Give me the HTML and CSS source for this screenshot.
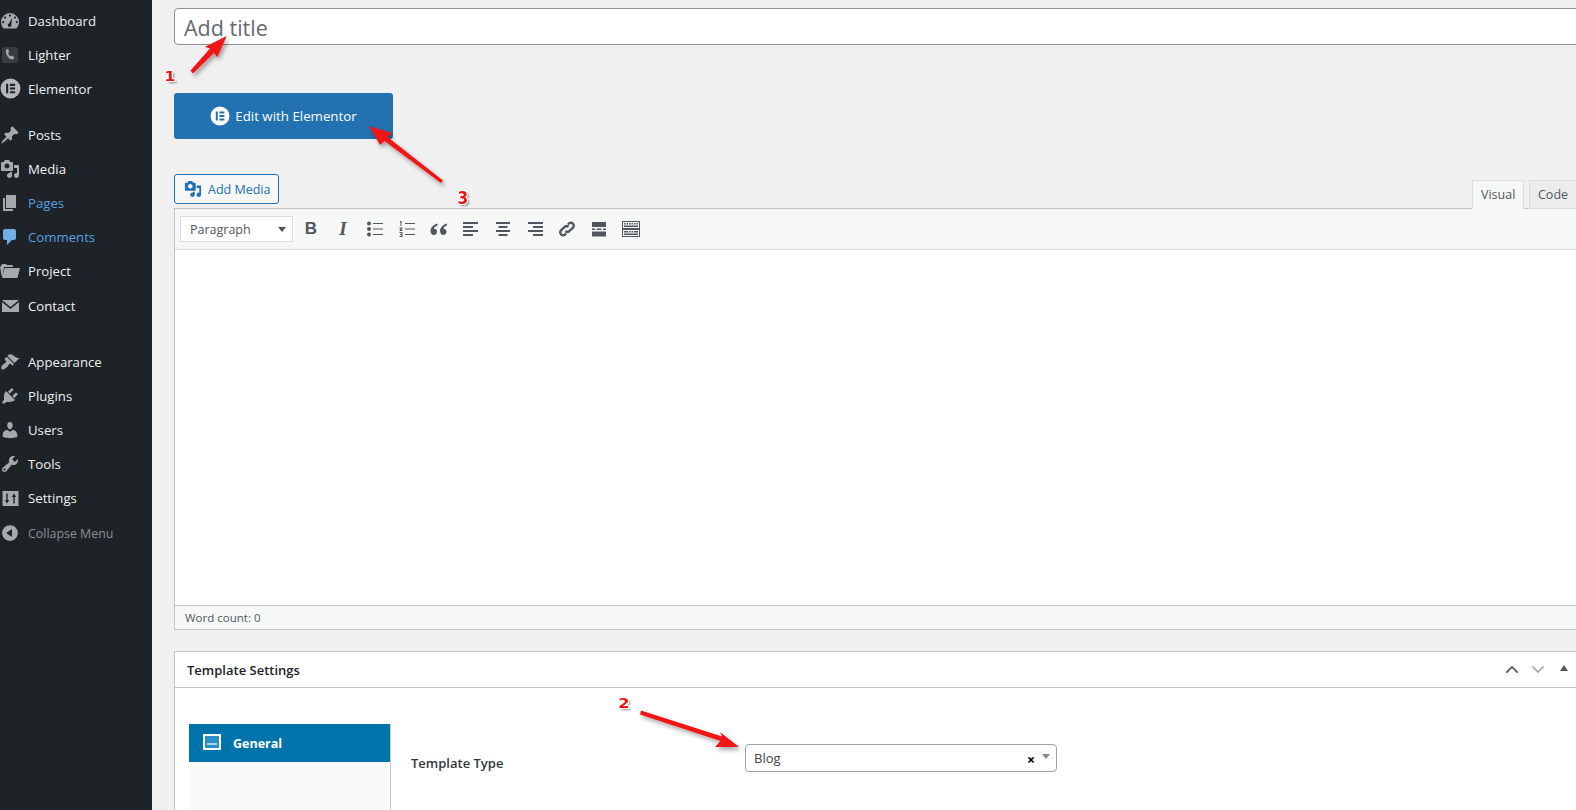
FILE: index.html
```html
<!DOCTYPE html>
<html lang="en">
<head>
<meta charset="utf-8">
<title>Add New Page</title>
<link rel="stylesheet" href="styles.css">
</head>
<body>
<svg class="sprite" width="0" height="0" aria-hidden="true">
  <symbol id="i-dash" viewBox="0 0 20 20"><path fill-rule="evenodd" d="M10 2a9 9 0 0 1 9 9c0 2.500-1 4.800-2.600 6.500H3.600A9 9 0 0 1 1 11a9 9 0 0 1 9-9zM10 3.500a1.100 1.100 0 1 0 0 2.200 1.100 1.100 0 0 0 0-2.200zM5 5.500a1.100 1.100 0 1 0 0 2.200 1.100 1.100 0 0 0 0-2.200zM15 5.500a1.100 1.100 0 1 0 0 2.200 1.100 1.100 0 0 0 0-2.200zM3.200 10a1.100 1.100 0 1 0 0 2.200 1.100 1.100 0 0 0 0-2.200zM16.800 10a1.100 1.100 0 1 0 0 2.200 1.100 1.100 0 0 0 0-2.200zM12.300 6.800L9 12.500a1.800 1.800 0 1 0 2.300 1.100z"/></symbol>
  <symbol id="i-el" viewBox="0 0 20 20"><path fill-rule="evenodd" d="M10 .5a9.500 9.500 0 1 1 0 19 9.500 9.500 0 0 1 0-19zM5.800 5.500v9h2v-9zM9.400 5.500v2h5v-2zM9.400 9v2h5V9zM9.400 12.500v2h5v-2z"/></symbol>
  <symbol id="i-post" viewBox="0 0 20 20"><path d="M10.440 3.020l1.820-1.820 6.360 6.350-1.830 1.820c-1.050-.68-2.480-.57-3.410.36l-.75.75c-.92.93-1.040 2.350-.35 3.410l-1.830 1.820-2.410-2.410-2.800 2.790c-.42.42-3.380 2.710-3.800 2.290s1.860-3.390 2.280-3.810l2.790-2.790L4.100 9.360l1.830-1.820c1.050.69 2.480.57 3.400-.36l.75-.75c.93-.92 1.050-2.350.36-3.410z"/></symbol>
  <symbol id="i-media" viewBox="0 0 20 20"><path fill-rule="evenodd" d="M13 11V4c0-.55-.45-1-1-1h-1.670L9 1H5L3.670 3H2c-.55 0-1 .45-1 1v7c0 .55.45 1 1 1h10c.55 0 1-.45 1-1zM7 4.500c1.380 0 2.500 1.120 2.500 2.500S8.380 9.500 7 9.500 4.500 8.380 4.500 7 5.620 4.500 7 4.500zM14 6h5v10.500c0 1.380-1.120 2.500-2.500 2.500S14 17.880 14 16.500s1.120-2.500 2.500-2.500c.17 0 .34.02.5.05V9h-3V6zm-4 8.050V13h2v3.500c0 1.380-1.120 2.500-2.500 2.500S7 17.880 7 16.500 8.120 14 9.500 14c.17 0 .34.02.5.05z"/></symbol>
  <symbol id="i-page" viewBox="0 0 20 20"><path d="M6 15V2h10v13H6zm-1 1h8v2H3V5h2v11z"/></symbol>
  <symbol id="i-comment" viewBox="0 0 20 20"><path d="M5 2h9c1.100 0 2 .9 2 2v7c0 1.100-.9 2-2 2h-2l-5 5v-5H5c-1.100 0-2-.9-2-2V4c0-1.100.9-2 2-2z"/></symbol>
  <symbol id="i-folder" viewBox="0 0 20 20"><path d="M1 5l1-2h4l1 1h5l1 1v1H4L2.500 15H1.500L0 6zM4.500 7H20l-2.500 10H2z"/></symbol>
  <symbol id="i-mail" viewBox="0 0 20 20"><path d="M2 4h17L10.500 11zM2 6l8.500 7L19 6v10H2z"/></symbol>
  <symbol id="i-brush" viewBox="0 0 20 20"><path d="M14.480 11.060L7.410 3.990l1.500-1.500c.5-.56 2.300-.47 3.510.32 1.210.8 1.430 1.280 2.910 2.100 1.180.64 2.450 1.260 4.450.85zm-.71.71L6.700 4.700 4.930 6.470c-.39.39-.39 1.020 0 1.410l1.060 1.060c.39.39.39 1.030 0 1.420-.6.6-1.430 1.110-2.210 1.690-.35.26-.7.53-1.010.84C1.430 13.230.78 15.600 1.500 17s3.770-.07 5.410-1.710c.31-.31.58-.66.84-1.010.58-.78 1.090-1.610 1.690-2.210.39-.39 1.020-.39 1.410 0l1.060 1.060c.39.39 1.020.39 1.410 0z"/></symbol>
  <symbol id="i-plug" viewBox="0 0 20 20"><path d="M13.110 4.360L9.870 7.600 8 5.730l3.240-3.240c.35-.34 1.050-.2 1.560.32.52.51.66 1.210.31 1.550zm-8 1.770l.91-1.120 9.010 9.010-1.190.84c-.71.71-2.630 1.160-3.820 1.160H6.140L4.900 17.260c-.59.59-1.540.59-2.120 0-.59-.58-.59-1.530 0-2.120l1.240-1.240v-3.880c0-1.130.4-3.190 1.090-3.890zm7.260 3.970l3.240-3.240c.34-.35 1.040-.21 1.550.31.52.51.66 1.210.31 1.550l-3.240 3.250z"/></symbol>
  <symbol id="i-user" viewBox="0 0 20 20"><path d="M10 9.250c-2.270 0-2.730-3.440-2.730-3.440C7 4.020 7.820 2 9.970 2c2.160 0 2.980 2.020 2.710 3.810 0 0-.41 3.440-2.680 3.440zm0 2.570L12.720 10c2.390 0 4.520 2.330 4.520 4.530v2.490s-3.650 1.130-7.240 1.130c-3.650 0-7.240-1.130-7.240-1.130v-2.490c0-2.250 1.940-4.480 4.470-4.480z"/></symbol>
  <symbol id="i-tool" viewBox="0 0 20 20"><path fill-rule="evenodd" d="M16.680 9.770c-1.340 1.340-3.300 1.670-4.950.99l-5.410 6.520c-.99.99-2.590.99-3.580 0s-.99-2.590 0-3.570l6.520-5.420c-.68-1.650-.35-3.610.99-4.950 1.280-1.280 3.120-1.620 4.720-1.060l-2.890 2.890 2.820 2.820 2.860-2.870c.53 1.580.18 3.390-1.080 4.670zM3.810 16.210c.4.39 1.040.39 1.430 0 .4-.4.4-1.040 0-1.430-.39-.4-1.030-.4-1.430 0-.39.39-.39 1.030 0 1.430z"/></symbol>
  <symbol id="i-set" viewBox="0 0 20 20"><path fill-rule="evenodd" d="M2.500 3h16v15h-16zM6.300 5.500v6.500H4.800L7 15.500l2.200-3.500H7.700V5.500zM13.300 15.500V9h-1.500L14 5.500 16.200 9h-1.500v6.500z"/></symbol>
  <symbol id="i-collapse" viewBox="0 0 20 20"><path fill-rule="evenodd" d="M10 2.160c4.330 0 7.840 3.510 7.840 7.840s-3.510 7.840-7.840 7.840S2.160 14.330 2.160 10 5.710 2.160 10 2.160zm2 11.720V6.120L6.180 9.970z"/></symbol>
</svg>

<div class="layout">
  <nav class="sidebar">
    <ul class="menu">
      <li class="item"><svg class="ico"><use href="#i-dash"/></svg>Dashboard</li>
      <li class="item"><span class="ico-lighter"><svg viewBox="0 0 16 16"><path d="M4 2.500l2.200-.5 1 3-1.200 1c.4 1.400 1.400 2.700 2.800 3.400l1.200-.9 2.400 2-1 1.800C6.500 13 3.500 8 4 2.500z"/></svg></span>Lighter</li>
      <li class="item item-gap"><svg class="ico ico-big"><use href="#i-el"/></svg>Elementor</li>
      <li class="item"><svg class="ico"><use href="#i-post"/></svg>Posts</li>
      <li class="item"><svg class="ico"><use href="#i-media"/></svg>Media</li>
      <li class="item is-link"><svg class="ico"><use href="#i-page"/></svg>Pages</li>
      <li class="item is-link"><svg class="ico ico-blue"><use href="#i-comment"/></svg>Comments</li>
      <li class="item"><svg class="ico"><use href="#i-folder"/></svg>Project</li>
      <li class="item item-gap-wide"><svg class="ico"><use href="#i-mail"/></svg>Contact</li>
      <li class="item"><svg class="ico"><use href="#i-brush"/></svg>Appearance</li>
      <li class="item"><svg class="ico"><use href="#i-plug"/></svg>Plugins</li>
      <li class="item"><svg class="ico"><use href="#i-user"/></svg>Users</li>
      <li class="item"><svg class="ico"><use href="#i-tool"/></svg>Tools</li>
      <li class="item"><svg class="ico"><use href="#i-set"/></svg>Settings</li>
      <li class="item item-muted"><svg class="ico"><use href="#i-collapse"/></svg>Collapse Menu</li>
    </ul>
  </nav>

  <main class="main">
    <div class="title-input">Add title</div>

    <button class="el-button" type="button">
      <svg class="el-ico"><use href="#i-el"/></svg>Edit with Elementor
    </button>

    <div class="editor-top">
      <button class="add-media" type="button"><svg class="am-ico"><use href="#i-media"/></svg>Add Media</button>
      <div class="tabs">
        <span class="tab tab-on">Visual</span>
        <span class="tab">Code</span>
      </div>
    </div>

    <section class="editor">
      <div class="toolbar">
        <div class="format">Paragraph<span class="caret"></span></div>
        <div class="tools">
          <span class="tool tool-b">B</span>
          <span class="tool tool-i">I</span>
          <span class="tool"><svg viewBox="0 0 20 20"><circle cx="4" cy="4.500" r="2"/><circle cx="4" cy="10" r="2"/><circle cx="4" cy="15.500" r="2"/><path d="M8 4h10v1H8zM8 9.500h10v1H8zM8 15h10v1H8z"/></svg></span>
          <span class="tool"><svg viewBox="0 0 20 20"><path d="M3 2h1.500v5H3.500V3.200H3zM2.500 8.500h3v1L4 11h1.500v1h-3v-1L4 9.500H2.500zM2.500 13h3v5h-3v-1h2v-1H3v-1h1.500v-1h-2zM8 4h10v1H8zM8 9.500h10v1H8zM8 15h10v1H8z"/></svg></span>
          <span class="tool"><svg viewBox="0 0 20 20"><path d="M8.500 4.500C5 5.500 1.500 8 1.500 12c0 2.200 1.300 4 3.300 4s3.200-1.500 3.200-3.200-1.400-3-3-3c.3-1.800 1.800-2.800 3.500-3.300zM18 4.500c-3.500 1-7 3.500-7 7.500 0 2.200 1.300 4 3.300 4s3.200-1.500 3.200-3.200-1.400-3-3-3c.3-1.800 1.800-2.800 3.500-3.300z"/></svg></span>
          <span class="tool"><svg viewBox="0 0 20 20"><path d="M2 3h15v2H2zM2 7h10v2H2zM2 11h15v2H2zM2 15h10v2H2z"/></svg></span>
          <span class="tool"><svg viewBox="0 0 20 20"><path d="M3 3h14v2H3zM5.500 7h9v2h-9zM3 11h14v2H3zM5.500 15h9v2h-9z"/></svg></span>
          <span class="tool"><svg viewBox="0 0 20 20"><path d="M3 3h15v2H3zM8 7h10v2H8zM3 11h15v2H3zM8 15h10v2H8z"/></svg></span>
          <span class="tool"><svg viewBox="0 0 20 20"><path fill="none" stroke-width="2.400" d="M11 5.500l1.500-1.500a3 3 0 0 1 4 4l-4 4a3 3 0 0 1-4 0M9 14.500L7.500 16a3 3 0 0 1-4-4l4-4a3 3 0 0 1 4 0"/></svg></span>
          <span class="tool"><svg viewBox="0 0 20 20"><path d="M3 3h14v5H3zM3 9.500h3v1.500H3zM7.500 9.500h5v1.500h-5zM14 9.500h3v1.500h-3zM3 12.500h14v5H3z"/></svg></span>
          <span class="tool"><svg viewBox="0 0 20 20"><path fill-rule="evenodd" d="M1 2h18v16H1zM2 3v6h16V3zM2 11v6h16v-6zM3 4h1.500v1.500H3zM5.500 4H7v1.500H5.500zM8 4h1.500v1.500H8zM10.500 4H12v1.500h-1.500zM13 4h1.500v1.500H13zM15.500 4H17v1.500h-1.500zM3 6.500h14V8H3zM3 12h4v1.500H3zM8 12h1.500v1.500H8zM10.500 12H12v1.500h-1.500zM13 12h4v1.500h-4zM3 14.500h14V16H3z"/></svg></span>
        </div>
      </div>
      <div class="editor-body"></div>
      <div class="status">Word count: 0</div>
    </section>

    <section class="metabox">
      <header class="mb-head">
        <h2 class="mb-title">Template Settings</h2>
        <div class="mb-actions">
          <svg viewBox="0 0 16 10" class="mb-chev"><path d="M1.500 8.500L8 2l6.500 6.500"/></svg>
          <svg viewBox="0 0 16 10" class="mb-chev mb-chev-muted"><path d="M1.500 1.500L8 8l6.500-6.500"/></svg>
          <span class="mb-tri"></span>
        </div>
      </header>
      <div class="mb-body">
        <aside class="mb-side">
          <div class="mb-tab">
            <span class="mb-tab-ico"><span class="mb-tab-cells"></span></span>
            General
          </div>
        </aside>
        <div class="mb-field">
          <span class="mb-label">Template Type</span>
          <div class="select">
            <span class="select-val">Blog</span>
            <span class="select-x">×</span>
            <span class="select-caret"></span>
          </div>
        </div>
      </div>
    </section>
  </main>
</div>

<svg class="arrows" viewBox="0 0 1576 810" aria-hidden="true">
  <defs>
    <filter id="ash" x="-30%" y="-30%" width="160%" height="160%"><feDropShadow dx="2" dy="3" stdDeviation="2" flood-color="#000" flood-opacity=".35"/></filter>
  </defs>
  <g fill="#f01313" filter="url(#ash)">
    <path d="M190.500 70.500L210 48.500 205 46.700 226.700 36 217.300 57.300 214 53 193 73.500z"/>
    <path d="M369 126L392 133 387.500 137 443 180.500 441 183 384.500 141 380 145z"/>
    <path d="M739 747L715 747 720.500 741 640 714.500 641 710.500 722 736.500 720 732z"/>
  </g>
</svg>
<span class="num num-1">1</span>
<span class="num num-2">2</span>
<span class="num num-3">3</span>
</body>
</html>
```

FILE: styles.css
```css
* { box-sizing: border-box; }
html, body { margin: 0; padding: 0; height: 810px; overflow: hidden; }
body {
  position: relative;
  background: #f0f0f1;
  font-family: "Open Sans", "Noto Sans", "Liberation Sans", sans-serif;
  color: #3c434a;
  font-size: 13px;
}
.sprite { position: absolute; }
.layout { display: flex; height: 810px; }

.sidebar { width: 152px; flex: none; background: #1d2327; padding-top: 4px; }
.menu { list-style: none; margin: 0; padding: 0; }
.item {
  display: flex;
  align-items: center;
  height: 34px;
  padding-left: 28px;
  position: relative;
  color: #f0f0f1;
  font-size: 13.200px;
}
.item-gap { margin-bottom: 12px; }
.item-gap-wide { margin-top: 1px; margin-bottom: 22px; }
.is-link { color: #5b9fe3; }
.item-muted { color: #8c8f94; font-size: 12.400px; margin-top: 1px; }
.ico {
  position: absolute;
  left: 0;
  top: 7px;
  width: 20px;
  height: 20px;
  fill: #a7aaad;
}
.ico-big { fill: #b4b7ba; width: 21px; height: 21px; top: 6px; }
.ico-blue { fill: #72aee6; }
.ico-lighter {
  position: absolute;
  left: 2px;
  top: 9px;
  width: 16px;
  height: 16px;
  background: #3a3d40;
  border-radius: 2px;
}
.ico-lighter svg { display: block; width: 16px; height: 16px; fill: #a7aaad; }

.main { flex: none; width: 1424px; padding: 8px 0 0 22px; overflow: hidden; }
.title-input {
  height: 37px;
  width: 1420px;
  background: #fff;
  border: 1px solid #8c8f94;
  border-radius: 4px;
  padding: 0 9px;
  font-size: 21.500px;
  line-height: 37px;
  color: #646970;
}
.el-button {
  display: flex;
  align-items: center;
  justify-content: center;
  gap: 5px;
  width: 219px;
  height: 46px;
  margin-top: 48px;
  padding: 0;
  border: 0;
  border-radius: 3px;
  background: #2271b1;
  color: #fff;
  font: 13.300px "Open Sans", "Noto Sans", sans-serif;
}
.el-ico { width: 20px; height: 20px; fill: #fff; }

.editor-top {
  display: flex;
  justify-content: space-between;
  align-items: flex-end;
  width: 1420px;
  height: 69px;
}
.add-media {
  display: flex;
  align-items: center;
  gap: 6px;
  width: 105px;
  height: 30px;
  margin-bottom: 4px;
  padding: 0 0 0 9px;
  border: 1px solid #2271b1;
  border-radius: 3px;
  background: #f6f7f7;
  color: #2271b1;
  font: 12.500px "Open Sans", "Noto Sans", sans-serif;
}
.am-ico { width: 18px; height: 18px; fill: #2271b1; }
.tabs { display: flex; gap: 5px; width: 122px; margin-bottom: -1px; position: relative; z-index: 1; }
.tab {
  height: 29px;
  padding: 0 8px;
  line-height: 27px;
  font-size: 12.500px;
  color: #50575e;
  background: #ececec;
  border: 1px solid #dcdcde;
}
.tab-on { width: 52px; background: #f6f7f7; border-color: #dcdcde; border-bottom-color: #f6f7f7; }

.editor { width: 1420px; border: 1px solid #c3c4c7; background: #fff; }
.toolbar {
  display: flex;
  align-items: center;
  height: 41px;
  padding-left: 5px;
  background: #f6f7f7;
  border-bottom: 1px solid #dcdcde;
}
.format {
  display: flex;
  align-items: center;
  justify-content: space-between;
  width: 113px;
  height: 26px;
  padding: 0 5px 0 9px;
  background: #fff;
  border: 1px solid #dcdcde;
  font-size: 12.500px;
  color: #50575e;
}
.caret { border: 4px solid transparent; border-top: 5px solid #50575e; border-bottom: 0; margin-right: 1px; }
.tools { display: flex; margin-left: 2px; }
.tool {
  display: flex;
  align-items: center;
  justify-content: center;
  width: 32px;
  height: 24px;
  color: #50575e;
  font-size: 17px;
  font-weight: 700;
  font-family: "Liberation Sans", sans-serif;
}
.tool-i { font-family: "Liberation Serif", serif; font-style: italic; font-size: 19px; }
.tool svg { width: 20px; height: 20px; fill: #50575e; stroke: #50575e; stroke-width: 0; }
.editor-body { height: 355px; background: #fff; }
.status {
  height: 24px;
  padding-left: 10px;
  background: #f6f7f7;
  border-top: 1px solid #c3c4c7;
  font-size: 11.500px;
  line-height: 23px;
  color: #50575e;
}

.metabox {
  width: 1420px;
  height: 300px;
  margin-top: 21px;
  background: #fff;
  border: 1px solid #c3c4c7;
}
.mb-head {
  display: flex;
  align-items: center;
  justify-content: space-between;
  height: 36px;
  padding-left: 12px;
  border-bottom: 1px solid #c3c4c7;
}
.mb-title { margin: 0; font-size: 13px; font-weight: 600; color: #1d2327; }
.mb-actions { display: flex; align-items: center; gap: 12px; width: 88px; }
.mb-chev { width: 14px; height: 9px; fill: none; stroke: #50575e; stroke-width: 2; }
.mb-chev-muted { stroke: #a7aaad; }
.mb-tri { border: 4px solid transparent; border-bottom: 6px solid #50575e; border-top: 0; margin: -3px 0 0 3px; }
.mb-body { display: flex; padding: 36px 0 0 14px; }
.mb-side {
  width: 202px;
  height: 300px;
  background: #fafafa;
  border-right: 1px solid #ccc;
}
.mb-tab {
  display: flex;
  align-items: center;
  gap: 12px;
  height: 38px;
  padding-left: 14px;
  background: #0073aa;
  color: #fff;
  font-weight: 700;
  font-size: 12.500px;
}
.mb-tab-ico {
  display: flex;
  align-items: flex-end;
  width: 18px;
  height: 16px;
  margin-top: -3px;
  padding: 1px 2px 3px;
  border: 2px solid #fff;
  background: #2a8fc4;
}
.mb-tab-cells { display: block; width: 100%; height: 2px; background: #a9d6ee; }
.mb-field { display: flex; align-items: flex-start; padding: 20px 0 0 20px; }
.mb-label { width: 334px; padding-top: 10px; font-size: 13px; font-weight: 600; color: #32373c; line-height: 18px; }
.select {
  display: flex;
  align-items: center;
  width: 312px;
  height: 28px;
  padding: 0 6px 0 8px;
  border: 1px solid #a0a0a0;
  border-radius: 4px;
  font-size: 13px;
  color: #444;
}
.select-val { flex: 1; }
.select-x { color: #000; font-weight: 700; font-size: 14px; margin-right: 7px; margin-top: 2px; }
.select-caret { border: 4px solid transparent; border-top: 5px solid #888; border-bottom: 0; margin-top: -4px; }

.arrows { position: absolute; left: 0; top: 0; width: 1576px; height: 810px; pointer-events: none; }
.num {
  position: absolute;
  font-family: "DejaVu Sans", sans-serif;
  font-weight: 700;
  line-height: 14px;
  color: #f01313;
  text-shadow: -1px -1px 0 #fff, 1px -1px 0 #fff, -1px 1px 0 #fff, 1px 1px 0 #fff, 2px 2px 2px rgba(0,0,0,.45);
}
.num-1 { left: 165px; top: 69px; font-size: 14px; transform: scaleX(1.150); }
.num-2 { left: 619px; top: 696px; font-size: 14px; transform: scaleX(1.150); }
.num-3 { left: 457px; top: 191px; font-size: 17px; transform: scaleX(.9); }
```
